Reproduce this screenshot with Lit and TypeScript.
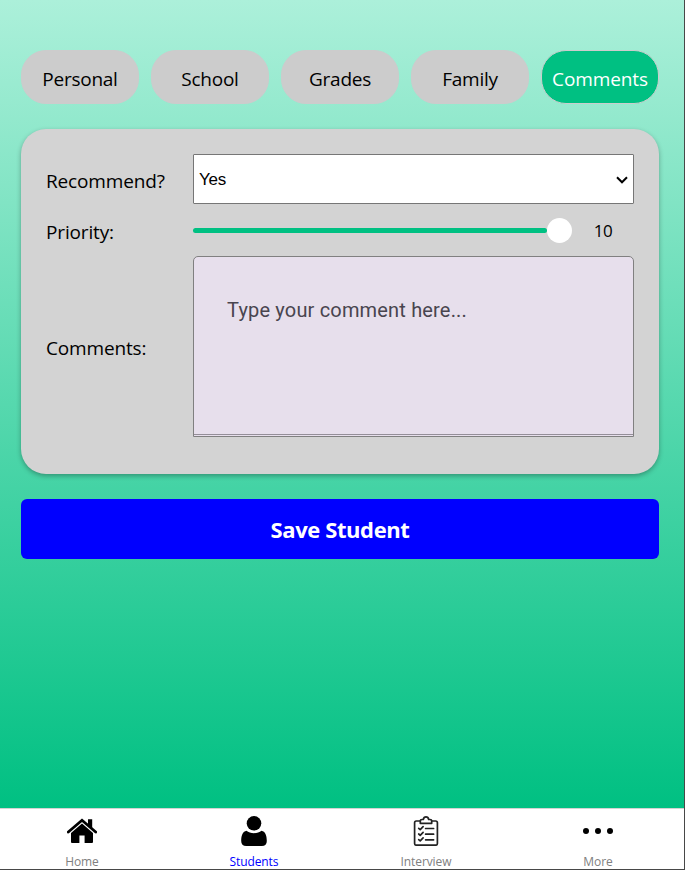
import { LitElement, html, svg, css } from "lit";
import { customElement, property, state } from "lit/decorators.js";
import { classMap } from "lit/directives/class-map.js";

const icons: Record<string, unknown> = {
  Home: svg`<path d="M1.3 16 15 4.3 28.7 16" fill="none" stroke="#000" stroke-width="2.8" stroke-linecap="round" stroke-linejoin="miter"/><path d="M21 3.200h4.200v9L21 8.500z"/><path d="M15 7.600 26 17v8.900q0 1-1 1h-7.400v-7.400h-5.200v7.400H5q-1 0-1-1V17z"/>`,
  Students: svg`<circle cx="15" cy="7.300" r="7.300"/><path d="M7.500 14.800C11 18 19 18 22.500 14.800c3.700.6 5.300 4.500 5.300 10.200q0 5-5 5H7.200q-5 0-5-5c0-5.700 1.600-9.600 5.300-10.200z"/>`,
  Interview: svg`<g fill="none" stroke="#222" stroke-width="1.700" stroke-linejoin="round" stroke-linecap="round"><path d="M9 5H5.300Q3.600 5 3.600 6.800v20.600q0 1.800 1.800 1.800h19.200q1.800 0 1.800-1.800V6.800Q26.400 5 24.600 5H21"/><path d="M9.300 7.300V4.800Q9.300 3.500 11 3.500h1.300Q12.800.9 15 .9t2.700 2.600H19q1.700 0 1.700 1.300v2.500z"/><path d="m7.700 12.300 1.500 1.300 2.900-3M7.700 18l1.500 1.300 2.900-3M7.700 23.600l1.500 1.300 2.900-3M14.600 12.500h8M14.600 18.200h8M14.600 23.800h8"/></g>`,
  More: svg`<circle cx="3" cy="15" r="3"/><circle cx="15" cy="15" r="3"/><circle cx="27" cy="15" r="3"/>`,
};

@customElement("student-tabs")
class StudentTabs extends LitElement {
  @property() active = "";

  static styles = css`
    :host {
      display: grid;
      grid-template-columns: repeat(5, 118px);
      column-gap: 12px;
    }
    .tab {
      box-sizing: border-box;
      height: 54px;
      padding: 3px 0 0;
      border: 1px solid #ccc;
      border-radius: 25px;
      background: #ccc;
      color: #000;
      font: 19px/50px "Open Sans", sans-serif;
      letter-spacing: -0.25px;
      text-align: center;
      white-space: nowrap;
    }
    .active {
      background: #00c082;
      color: #fff;
      letter-spacing: -0.1px;
    }
  `;

  render() {
    return ["Personal", "School", "Grades", "Family", "Comments"].map(
      (name) => html`<button class=${classMap({ tab: true, active: name === this.active })}>${name}</button>`
    );
  }
}

@customElement("bottom-nav")
class BottomNav extends LitElement {
  @property() active = "";

  static styles = css`
    :host {
      display: grid;
      grid-template-columns: repeat(4, 172px);
      justify-content: start;
      box-sizing: border-box;
      height: 61px;
      border-top: 1px solid #d3d3d3;
      background: #fff;
      overflow: hidden;
    }
    .item {
      display: flex;
      flex-direction: column;
      align-items: center;
      margin-left: -8px;
      padding-top: 7px;
      color: #808080;
      font: 12px/18px "Open Sans", sans-serif;
      letter-spacing: -0.1px;
    }
    .icon {
      width: 30px;
      height: 30px;
      margin-bottom: 7px;
      fill: #000;
    }
    .active {
      color: #00f;
    }
  `;

  render() {
    return Object.entries(icons).map(
      ([name, shape]) => html`<div class=${classMap({ item: true, active: name === this.active })}>
        <svg class="icon" viewBox="0 0 30 30">${shape}</svg>
        <span>${name}</span>
      </div>`
    );
  }
}

@customElement("app-root")
class AppRoot extends LitElement {
  @state() private priority = 10;

  static styles = css`
    :host {
      display: flex;
      flex-direction: column;
      box-sizing: border-box;
      width: 685px;
      height: 870px;
      border-right: 1px solid #484848;
      border-bottom: 1px solid #484848;
      overflow: hidden;
      font: 19px/26px "Open Sans", sans-serif;
      color: #000;
    }
    .page {
      flex: 1;
      display: flex;
      flex-direction: column;
      gap: 25px;
      box-sizing: border-box;
      padding: 50px 25px 0 21px;
      background: linear-gradient(#acf0da, #00c082);
    }
    .card {
      display: grid;
      grid-template-columns: 147px 441px;
      grid-template-rows: 50px 52px 181px;
      align-items: center;
      box-sizing: border-box;
      height: 345px;
      padding: 25px;
      border-radius: 25px;
      background: #d3d3d3;
      box-shadow: 0 2px 5px rgba(0, 0, 0, 0.3);
    }
    .label {
      padding-top: 3px;
      letter-spacing: -0.15px;
    }
    .select {
      display: flex;
      align-items: center;
      justify-content: space-between;
      box-sizing: border-box;
      height: 50px;
      padding: 2px 5px 0;
      border: 1px solid #767676;
      border-radius: 1px;
      background: #fff;
      font: 17px/20px "Liberation Sans", sans-serif;
      letter-spacing: -0.2px;
    }
    .chevron {
      width: 12px;
      height: 8px;
      fill: none;
      stroke: #000;
      stroke-width: 2;
    }
    .slider {
      display: flex;
      align-items: center;
      height: 25px;
    }
    .track {
      display: flex;
      width: 379px;
      align-items: center;
    }
    .fill {
      height: 5px;
      border-radius: 3px;
      background: #00c082;
    }
    .thumb {
      flex: none;
      width: 25px;
      height: 25px;
      border-radius: 50%;
      background: #fff;
    }
    .value {
      width: 62px;
      padding-top: 2px;
      text-align: center;
      font-size: 17px;
      letter-spacing: -0.4px;
    }
    .comment {
      box-sizing: border-box;
      height: 181px;
      padding-bottom: 1px;
      border: 1px solid #808080;
      border-radius: 5px 5px 0 0;
      background: #e7dfec;
    }
    .comment-text {
      box-sizing: border-box;
      height: 178px;
      padding: 41px 33px;
      border-bottom: 1px solid #948e98;
      font: 20px/24px Roboto, sans-serif;
      letter-spacing: 0.17px;
      color: #49454f;
    }
    .save {
      height: 60px;
      padding: 0;
      border: 0;
      border-radius: 6px;
      background: #00f;
      color: #fff;
      font: 700 22px/60px "Open Sans", sans-serif;
      letter-spacing: -0.4px;
    }
  `;

  render() {
    return html`
      <main class="page">
        <student-tabs active="Comments"></student-tabs>
        <section class="card">
          <span class="label">Recommend?</span>
          <div class="select">
            <span>Yes</span>
            <svg class="chevron" viewBox="0 0 12 8"><path d="M1 1.300 6 6.300l5-5" /></svg>
          </div>
          <span class="label">Priority:</span>
          <div class="slider">
            <div class="track">
              <div class="fill" style="width:${(this.priority / 10) * 354}px"></div>
              <div class="thumb"></div>
            </div>
            <span class="value">${this.priority}</span>
          </div>
          <span class="label">Comments:</span>
          <div class="comment"><div class="comment-text">Type your comment here...</div></div>
        </section>
        <button class="save">Save Student</button>
      </main>
      <bottom-nav active="Students"></bottom-nav>
    `;
  }
}
